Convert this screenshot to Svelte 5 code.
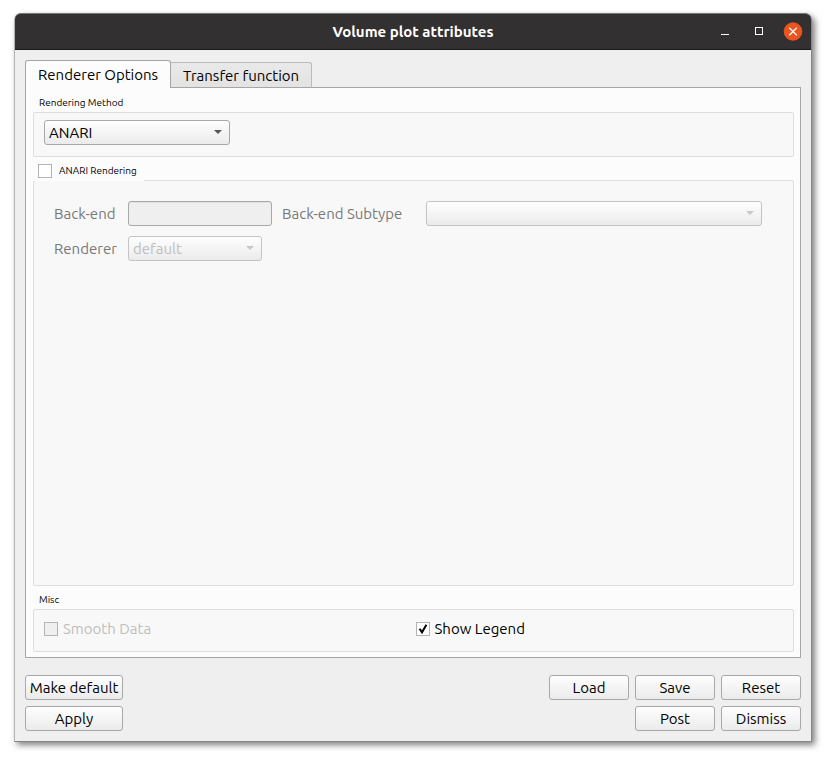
<script lang="ts">
	let tabs = ['Renderer Options', 'Transfer function'];
	let activeTab = $state(0);

	let method = $state('ANARI');
	let anariEnabled = $state(false);
	let backend = $state('');
	let subtype = $state('');
	let renderer = $state('default');
	let smoothData = $state(false);
	let showLegend = $state(true);
</script>

{#snippet tick()}
	<svg class="tick" width="14" height="14" viewBox="0 0 14 14" aria-hidden="true">
		<path d="M3.6 6.8 6 10.3 10.4 2.8" fill="none" stroke="#000" stroke-width="2" />
	</svg>
{/snippet}

<main class="desktop">
	<div class="window">
		<header class="titlebar">
			<h1>Volume plot attributes</h1>
			<div class="controls">
				<button type="button" aria-label="Minimize">
					<svg width="20" height="20" viewBox="0 0 20 20"><path d="M6 12.5h8" stroke="#fff" /></svg>
				</button>
				<button type="button" aria-label="Maximize">
					<svg width="20" height="20" viewBox="0 0 20 20">
						<rect x="6.5" y="5.5" width="7" height="7" fill="none" stroke="#fff" />
					</svg>
				</button>
				<button type="button" aria-label="Close">
					<svg width="20" height="20" viewBox="0 0 20 20">
						<circle cx="10" cy="9.5" r="9.3" fill="#e95420" />
						<path d="m6.3 5.8 7.4 7.4m0-7.4-7.4 7.4" stroke="#fff" stroke-width="1.3" />
					</svg>
				</button>
			</div>
		</header>

		<div class="body">
			<div class="tabs" role="tablist">
				{#each tabs as tab, i}
					<button
						type="button"
						role="tab"
						class="tab"
						class:active={activeTab === i}
						aria-selected={activeTab === i}
						onclick={() => (activeTab = i)}>{tab}</button
					>
				{/each}
			</div>

			<div class="panel" role="tabpanel">
				{#if activeTab === 0}
					<fieldset>
						<legend>Rendering Method</legend>
						<div class="box method-box">
							<span class="combo method">
								<select bind:value={method} aria-label="Rendering Method">
									<option>ANARI</option>
								</select>
							</span>
						</div>
					</fieldset>

					<fieldset class="grow" disabled={!anariEnabled}>
						<legend class="checkable">
							<label>
								<span class="check">
									<input type="checkbox" bind:checked={anariEnabled} />
									{@render tick()}
								</span>
								ANARI Rendering
							</label>
						</legend>
						<div class="box anari-box">
							<label for="backend">Back-end</label>
							<input id="backend" type="text" bind:value={backend} />
							<label for="subtype">Back-end Subtype</label>
							<span class="combo">
								<select id="subtype" bind:value={subtype}>
									<option value=""></option>
								</select>
							</span>
							<label for="renderer">Renderer</label>
							<span class="combo renderer">
								<select id="renderer" bind:value={renderer}>
									<option>default</option>
								</select>
							</span>
						</div>
					</fieldset>

					<fieldset>
						<legend>Misc</legend>
						<div class="box misc-box">
							<label class="off">
								<span class="check">
									<input type="checkbox" bind:checked={smoothData} disabled />
									{@render tick()}
								</span>
								Smooth Data
							</label>
							<label>
								<span class="check">
									<input type="checkbox" bind:checked={showLegend} />
									{@render tick()}
								</span>
								Show Legend
							</label>
						</div>
					</fieldset>
				{/if}
			</div>

			<footer>
				<div class="row">
					<button type="button" class="btn wide">Make default</button>
					<button type="button" class="btn push">Load</button>
					<button type="button" class="btn">Save</button>
					<button type="button" class="btn">Reset</button>
				</div>
				<div class="row">
					<button type="button" class="btn wide">Apply</button>
					<button type="button" class="btn push">Post</button>
					<button type="button" class="btn">Dismiss</button>
				</div>
			</footer>
		</div>
	</div>
</main>

<style>
	:global(body) {
		background: #fff;
	}

	.desktop,
	.desktop * {
		box-sizing: border-box;
	}

	.desktop {
		display: flex;
		min-height: 100vh;
		padding: 13px 18px 18px 14px;
		font-family: Ubuntu, 'Noto Sans', sans-serif;
		font-size: 15px;
		line-height: 20px;
		color: #000;
	}

	button,
	input,
	select {
		font: inherit;
		color: inherit;
		margin: 0;
	}

	.window {
		flex: 1;
		display: flex;
		flex-direction: column;
		border: 1px solid #858585;
		border-top: 0;
		border-left-color: #b4b4b4;
		border-radius: 7px 7px 0 0;
		background: #efefef;
		box-shadow: 3px 3px 6px rgba(0, 0, 0, 0.5);
	}

	.titlebar {
		display: grid;
		grid-template-columns: 1fr auto 1fr;
		align-items: center;
		height: 37px;
		border-top: 1px solid #777;
		border-bottom: 1px solid #1c1b1c;
		border-radius: 6px 6px 0 0;
		background: #333031;
		color: #fff;
	}

	h1 {
		grid-column: 2;
		margin: 0;
		font-size: 15px;
		font-weight: 700;
		line-height: 20px;
	}

	.controls {
		display: flex;
		justify-content: flex-end;
		gap: 14px;
		padding-right: 8px;
	}

	.controls button {
		width: 20px;
		height: 20px;
		padding: 0;
		border: 0;
		background: none;
	}

	.controls svg {
		display: block;
	}

	.body {
		flex: 1;
		display: flex;
		flex-direction: column;
		padding: 10px;
	}

	.tabs {
		display: flex;
		align-items: flex-end;
		position: relative;
		margin-bottom: -1px;
	}

	.tab {
		height: 26px;
		padding: 1px 12px 0;
		border: 1px solid #bbb;
		border-left: 0;
		border-bottom-color: #a6a6a6;
		border-radius: 0 3px 0 0;
		background: linear-gradient(#e9e9e9, #e3e3e3);
	}

	.tab.active {
		height: 28px;
		padding: 0 12px;
		border: 1px solid #a6a6a6;
		border-bottom: 0;
		border-radius: 3px 3px 0 0;
		background: #fcfcfc;
	}

	.panel {
		flex: 1;
		display: flex;
		flex-direction: column;
		padding: 4px 6px 5px 7px;
		border: 1px solid #a6a6a6;
		background: #fcfcfc;
	}

	fieldset {
		min-width: 0;
		margin: 0;
		padding: 0;
		border: 0;
	}

	.grow {
		flex: 1;
		display: flex;
		flex-direction: column;
	}

	.grow .box {
		flex: 1;
	}

	legend {
		padding: 4px 6px 0;
		height: 20px;
		font-size: 10px;
		line-height: 14px;
	}

	fieldset + fieldset legend {
		padding-top: 7px;
		height: 23px;
	}

	/* the title of a checkable group hides the start of the frame */
	fieldset legend.checkable {
		position: relative;
		height: 24px;
		padding: 7px 7px 0 5px;
		margin-bottom: -1px;
		background: #fcfcfc;
	}

	.checkable label {
		display: flex;
		align-items: center;
		gap: 7px;
		line-height: 14px;
	}

	.box {
		border: 1px solid #dedede;
		border-radius: 2px;
		background: #f8f8f8;
	}

	.method-box {
		padding: 7px 10px 11px;
	}

	.anari-box {
		display: grid;
		grid-template-columns: 64px 144px 134px 1fr;
		align-content: start;
		align-items: center;
		gap: 10px;
		padding: 20px 31px 20px 20px;
		color: #787878;
	}

	.misc-box {
		display: grid;
		grid-template-columns: 1fr 1fr;
		gap: 4px;
		padding: 9px 10px 12px;
	}

	.misc-box label {
		display: flex;
		align-items: center;
		gap: 5px;
	}

	.misc-box .off {
		color: #bebebe;
	}

	.combo {
		position: relative;
		display: block;
	}

	.combo::after {
		content: '';
		position: absolute;
		top: 10px;
		right: 8px;
		border: 4px solid transparent;
		border-top: 4px solid #555;
		border-bottom: 0;
		pointer-events: none;
	}

	.method {
		width: 186px;
	}

	.renderer {
		width: 134px;
	}

	select {
		appearance: none;
		display: block;
		width: 100%;
		height: 25px;
		padding: 0 20px 0 4px;
		border: 1px solid #a8a8a8;
		border-radius: 3px;
		background: linear-gradient(#fefefe, #ebebeb);
	}

	select:disabled {
		border-color: #c4c4c4;
		color: #bebebe;
		opacity: 1;
	}

	.combo:has(select:disabled)::after {
		border-top-color: #c8c8c8;
	}

	input[type='text'] {
		width: 100%;
		height: 25px;
		padding: 0 4px;
		border: 1px solid #a8a8a8;
		border-radius: 3px;
		background: #fff;
	}

	input[type='text']:disabled {
		background: #efefef;
		box-shadow: inset 0 1px #e2e2e2;
	}

	.check {
		position: relative;
		width: 14px;
		height: 14px;
	}

	input[type='checkbox'] {
		appearance: none;
		display: block;
		width: 14px;
		height: 14px;
		border: 1px solid #b4b4b4;
		background: #fff;
	}

	input[type='checkbox']:disabled {
		background: #efefef;
	}

	.tick {
		position: absolute;
		inset: 0;
		visibility: hidden;
		pointer-events: none;
	}

	input:checked + .tick {
		visibility: visible;
	}

	footer {
		display: flex;
		flex-direction: column;
		gap: 6px;
		padding-top: 17px;
	}

	.row {
		display: flex;
		gap: 6px;
	}

	.btn {
		width: 80px;
		height: 25px;
		padding: 0;
		border: 1px solid #a8a8a8;
		border-radius: 3px;
		background: linear-gradient(#fefefe, #ebebeb);
		white-space: nowrap;
	}

	.btn:active {
		background: #dcdcdc;
	}

	.wide {
		width: 98px;
	}

	.push {
		margin-left: auto;
	}
</style>
